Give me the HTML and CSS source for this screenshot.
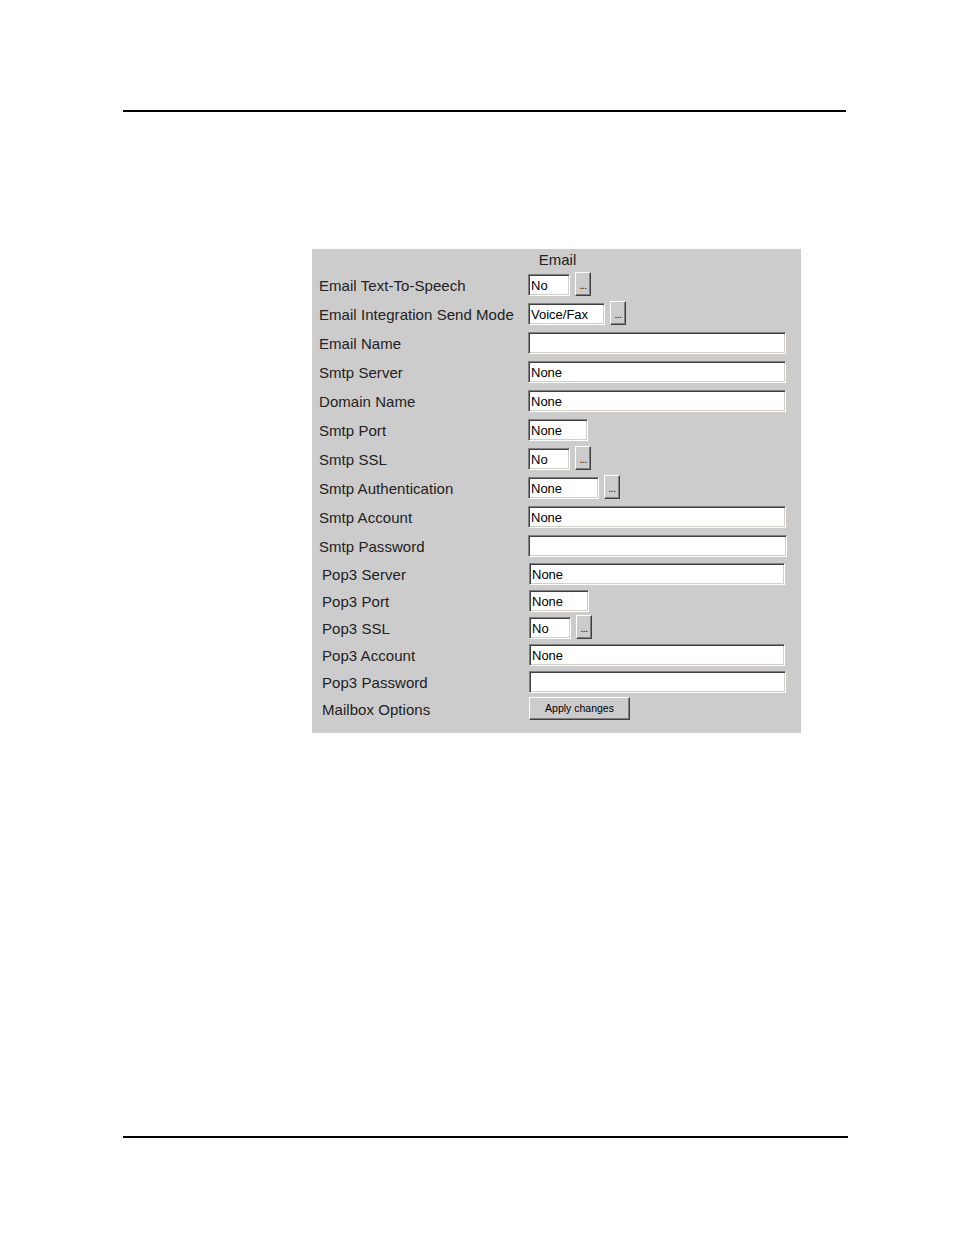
FILE: index.html
```html
<!DOCTYPE html>
<html>
<head>
<meta charset="utf-8">
<title>Email</title>
<link rel="stylesheet" href="styles.css">
</head>
<body>
<div class="page">
  <div class="rule rule-top"></div>
  <div class="panel">
    <div class="panel-title">Email</div>
    <div class="section section-smtp">
      <div class="row"><span class="label">Email Text-To-Speech</span><span class="field"><span class="input w41">No</span><span class="pick">...</span></span></div>
      <div class="row"><span class="label">Email Integration Send Mode</span><span class="field"><span class="input w77">Voice/Fax</span><span class="pick">...</span></span></div>
      <div class="row"><span class="label">Email Name</span><span class="field"><span class="input w258"></span></span></div>
      <div class="row"><span class="label">Smtp Server</span><span class="field"><span class="input w258">None</span></span></div>
      <div class="row"><span class="label">Domain Name</span><span class="field"><span class="input w258">None</span></span></div>
      <div class="row"><span class="label">Smtp Port</span><span class="field"><span class="input w60">None</span></span></div>
      <div class="row"><span class="label">Smtp SSL</span><span class="field"><span class="input w41">No</span><span class="pick">...</span></span></div>
      <div class="row"><span class="label">Smtp Authentication</span><span class="field"><span class="input w71">None</span><span class="pick">...</span></span></div>
      <div class="row"><span class="label">Smtp Account</span><span class="field"><span class="input w258">None</span></span></div>
      <div class="row"><span class="label">Smtp Password</span><span class="field"><span class="input w259"></span></span></div>
    </div>
    <div class="section section-pop">
      <div class="row"><span class="label">Pop3 Server</span><span class="field"><span class="input w256">None</span></span></div>
      <div class="row"><span class="label">Pop3 Port</span><span class="field"><span class="input w60">None</span></span></div>
      <div class="row"><span class="label">Pop3 SSL</span><span class="field"><span class="input w41">No</span><span class="pick">...</span></span></div>
      <div class="row"><span class="label">Pop3 Account</span><span class="field"><span class="input w256">None</span></span></div>
      <div class="row"><span class="label">Pop3 Password</span><span class="field"><span class="input w257"></span></span></div>
      <div class="row"><span class="label">Mailbox Options</span><span class="field"><span class="apply">Apply changes</span></span></div>
    </div>
  </div>
  <div class="rule rule-bottom"></div>
</div>
</body>
</html>
```

FILE: styles.css
```css
html, body {
  margin: 0;
  padding: 0;
  background: #ffffff;
}

.page {
  width: 954px;
  padding-top: 110px;
  font-family: "Liberation Sans", Arial, sans-serif;
}

.rule {
  height: 2px;
  background: #000;
}

.rule-top {
  margin-left: 123px;
  width: 723px;
}

.rule-bottom {
  margin-left: 123px;
  width: 725px;
  margin-top: 403px;
}

.panel {
  margin-top: 137px;
  margin-left: 312px;
  width: 489px;
  height: 484px;
  box-sizing: border-box;
  background: #cccccc;
  display: flex;
  flex-direction: column;
}

.panel-title {
  height: 21px;
  line-height: 21px;
  text-align: center;
  font-size: 15px;
  color: #222;
  padding-left: 2px;
}

.section {
  display: flex;
  flex-direction: column;
}

.section-smtp {
  padding-left: 7px;
}

.section-smtp .row {
  height: 29px;
}

.section-smtp .label {
  width: 209px;
}

.section-pop {
  padding-left: 10px;
}

.section-pop .row {
  height: 27px;
}

.section-pop .label {
  width: 207px;
}

.row {
  display: flex;
  align-items: center;
}

.label {
  flex: none;
  font-size: 15px;
  color: #222;
  white-space: nowrap;
  padding-top: 1px;
  letter-spacing: 0.05px;
}

.field {
  display: flex;
  align-items: center;
  gap: 5px;
}

.input {
  display: block;
  box-sizing: border-box;
  height: 22px;
  background: #fff;
  border: 1px solid;
  border-color: #808080 #ffffff #ffffff #808080;
  box-shadow: inset 1px 1px 0 #404040, inset -1px -1px 0 #d4d0c8;
  font-size: 13px;
  line-height: 21px;
  padding: 0 2px 0 2px;
  color: #000;
  white-space: nowrap;
  overflow: hidden;
}

.w41 { width: 42px; }
.w60 { width: 60px; }
.w71 { width: 71px; }
.w77 { width: 77px; }
.w256 { width: 256px; }
.w257 { width: 257px; }
.w258 { width: 258px; }
.w259 { width: 259px; }

.pick {
  display: block;
  box-sizing: border-box;
  width: 16px;
  height: 24px;
  background: #cccccc;
  border: 1px solid;
  border-color: #ffffff #404040 #404040 #ffffff;
  box-shadow: inset -1px -1px 0 #808080;
  font-size: 10px;
  line-height: 26px;
  text-align: center;
  color: #000;
  letter-spacing: -0.5px;
  margin-top: -1px;
}

.apply {
  display: block;
  box-sizing: border-box;
  width: 101px;
  height: 23px;
  background: #cccccc;
  border: 1px solid;
  border-color: #ffffff #404040 #404040 #ffffff;
  box-shadow: inset -1px -1px 0 #808080;
  font-size: 10.5px;
  line-height: 21px;
  text-align: center;
  color: #000;
  white-space: nowrap;
}
```
